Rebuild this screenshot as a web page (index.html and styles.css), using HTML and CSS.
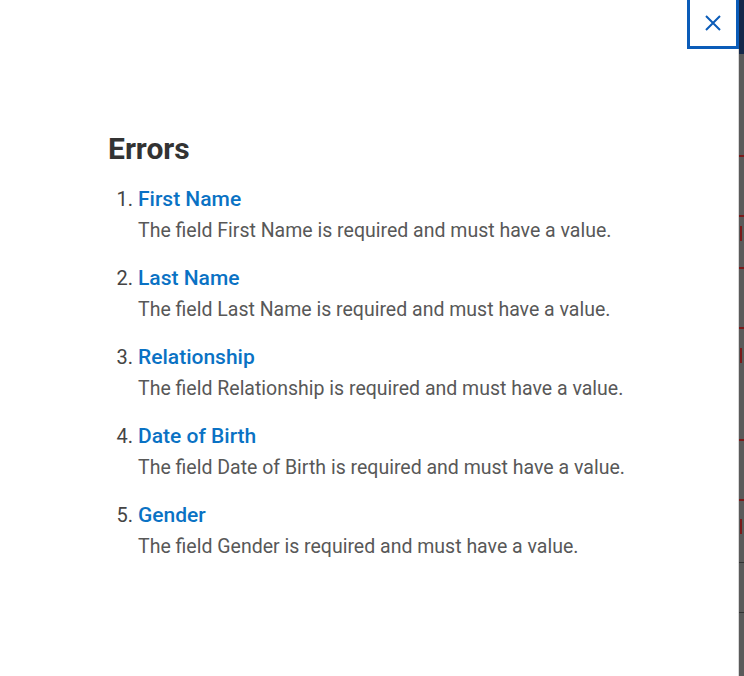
FILE: index.html
```html
<!DOCTYPE html>
<html lang="en">
<head>
    <meta charset="UTF-8">
    <meta name="viewport" content="width=device-width, initial-scale=1.0">
    <title>Errors</title>
    <link rel="stylesheet" href="styles.css">
</head>
<body>
    <div class="panel">
        <button class="close" aria-label="Close">
            <svg width="16" height="16" viewBox="0 0 16 16">
                <path d="M1 1 L15 15 M15 1 L1 15" stroke="#0b5cb8" stroke-width="2" fill="none"/>
            </svg>
        </button>
        <h2>Errors</h2>
        <ol class="errors">
            <li>
                <a href="#">First Name</a>
                <p>The field First Name is required and must have a value.</p>
            </li>
            <li>
                <a href="#">Last Name</a>
                <p>The field Last Name is required and must have a value.</p>
            </li>
            <li>
                <a href="#">Relationship</a>
                <p>The field Relationship is required and must have a value.</p>
            </li>
            <li>
                <a href="#">Date of Birth</a>
                <p>The field Date of Birth is required and must have a value.</p>
            </li>
            <li>
                <a href="#">Gender</a>
                <p>The field Gender is required and must have a value.</p>
            </li>
        </ol>
    </div>

    <div class="backdrop">
        <div class="backdrop-top"></div>
        <span class="mark h" style="top: 155px"></span>
        <span class="mark h" style="top: 215px"></span>
        <span class="mark v" style="top: 226px"></span>
        <span class="mark h" style="top: 267px"></span>
        <span class="mark h" style="top: 327px"></span>
        <span class="mark v" style="top: 348px"></span>
        <span class="mark h" style="top: 439px"></span>
        <span class="mark h" style="top: 499px"></span>
        <span class="mark v" style="top: 519px"></span>
        <span class="line" style="top: 562px"></span>
        <span class="line" style="top: 612px"></span>
    </div>
</body>
</html>
```

FILE: styles.css
```css
body {
    margin: 0;
    height: 676px;
    display: flex;
    font-family: Roboto, "Liberation Sans", sans-serif;
    background: #fff;
    overflow: hidden;
}
.panel {
    position: relative;
    flex: 1;
    padding: 132px 0 0 108px;
    background: #fff;
    border-right: 1px solid #d8d8d8;
}
.close {
    position: absolute;
    top: -3px;
    right: -1px;
    width: 52px;
    height: 52px;
    padding: 0;
    border: 3px solid #0b5cb8;
    background: #fff;
    display: flex;
    align-items: center;
    justify-content: center;
    cursor: pointer;
}
h2 {
    margin: 0;
    font-size: 30px;
    line-height: 34px;
    font-weight: 700;
    color: #333;
}
.errors {
    margin: 17px 0 0;
    padding-left: 30px;
    color: #444;
    font-size: 20px;
}
.errors li {
    margin-bottom: 16px;
    line-height: 33px;
}
.errors a {
    font-size: 21px;
    color: #0a72c4;
    font-weight: 500;
    text-decoration: none;
}
.errors p {
    margin: 0;
    font-size: 19.5px;
    line-height: 30px;
    color: #585858;
}
.backdrop {
    position: relative;
    width: 5px;
    background: #5a5a5a;
}
.backdrop-top {
    height: 54px;
    background: #14284a;
}
.mark {
    position: absolute;
    background: #7a1a1a;
}
.mark.h {
    left: 0;
    width: 5px;
    height: 2px;
}
.mark.v {
    left: 1px;
    width: 2px;
    height: 15px;
}
.line {
    position: absolute;
    left: 0;
    width: 5px;
    height: 1px;
    background: #333;
}
```
